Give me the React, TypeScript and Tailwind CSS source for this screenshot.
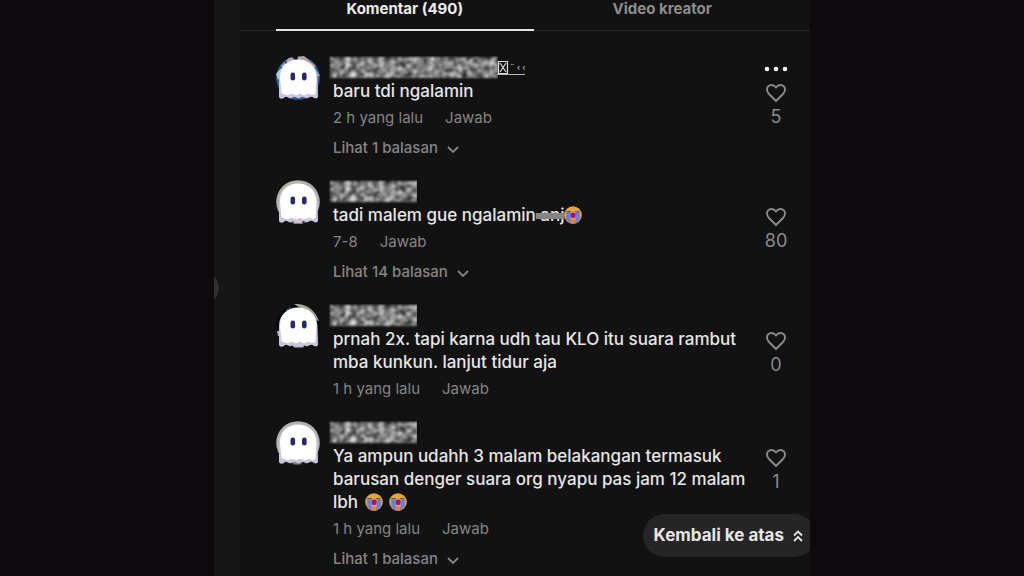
import { ReactNode } from 'react';

interface Comment {
  id: number;
  avatar: 'blue' | 'tan' | 'dark' | 'grey';
  nameWidth: string;
  extra?: boolean;
  body: ReactNode;
  time: string;
  likes: number;
  replies: number;
}

function CryingEmoji() {
  return (
    <svg viewBox="0 0 18 18" className="inline-block h-[18px] w-[18px] align-[-3px]" role="img" aria-label="menangis">
      <circle cx="9" cy="9" r="8.8" fill="#e3a63a" />
      <path d="M3 13.500h12Q13 17.800 9 17.800T3 13.500Z" fill="#e2803f" />
      <path d="M2.500 5.500h4.500M11 5.500h4.500" stroke="#7b5a3c" strokeWidth="1.200" />
      <path d="M2.200 6h4.400v11.200Q3.500 16 2.200 13Z" fill="#6580dc" />
      <path d="M11.600 6H15.800v7q-1.200 3-4.200 4.200Z" fill="#6580dc" />
      <path d="M2 12.500 4 14v2.500Q2.500 15 2 12.500Z" fill="#e06a52" />
      <rect x="6.700" y="6.600" width="4.800" height="5.400" rx="2" fill="#a9078c" />
    </svg>
  );
}

function Ghost({ tone }: { tone: Comment['avatar'] }) {
  return (
    <svg viewBox="0 0 44 44" className="mt-px h-11 w-11 shrink-0" aria-hidden="true">
      {tone === 'blue' && (
        <>
          <circle cx="22" cy="22" r="21.800" fill="#2a6398" />
          <path d="M5 10 13 2 28 0 40 10 34 14 22 5 8 15Z" fill="#b5a3a6" />
          <path d="M15 0 21 6 22 0Z" fill="#14151d" />
          <path d="M9 5l5 3-4 4Z" fill="#2b2f45" />
          <path d="M0 18 5 12 6 17 2 24Z" fill="#a5cbe0" />
          <path d="M37 9 44 20 40 21Z" fill="#88a9c7" />
        </>
      )}
      {tone === 'tan' && (
        <>
          <circle cx="22" cy="22" r="21.800" fill="#b4b1aa" />
          <path d="M4 34Q22 54 40 34Z" fill="#36312e" />
          <path d="M15 36h13l-2 7.500h-8Z" fill="#dfbda3" />
        </>
      )}
      {tone === 'dark' && (
        <>
          <circle cx="22" cy="22" r="21.800" fill="#07080b" />
          <path d="M18 0Q36-1 43 17L39 16 28 6Z" fill="#a7a49d" />
          <path d="M9 6 15 2 14 8Z" fill="#23415e" />
          <path d="M1 27h3v5H2Z" fill="#b9b7bb" />
          <path d="M15 39h15l-3 4.500h-9Z" fill="#c3bec9" />
        </>
      )}
      {tone === 'grey' && (
        <>
          <circle cx="22" cy="22" r="21.800" fill="#b5b3b0" />
          <path d="M3 35Q22 55 41 35Z" fill="#1c1b1b" />
          <path d="M13 39h16l-5 4.500h-6Z" fill="#858281" />
        </>
      )}
      <path
        d="M3 41V22C3 11 11 4 22 4s19 7 19.500 18l.5 19q-1.500 2.500-4.500.5-2.500-1.500-4.500 0t-4.500 0q-2-1.500-4 0t-4 0q-2-1.500-4 0t-4.500 0-4 .5Q4 44 3 41Z"
        fill="#cbc5e0"
      />
      <path
        d="M5.500 37 4 22C4 10 12 3.500 22 3.500S40.500 10 40.500 22L39.500 37q-1.500 3-4.500 1.500t-4.300 0-4.400 0-4.300 0-4.400 0-4.300 0-4.300 0T5.500 37Z"
        fill="#fff"
      />
      <rect x="14.500" y="16.500" width="4.600" height="8" rx="2.300" fill="#29296b" />
      <rect x="26" y="16.500" width="4.600" height="8" rx="2.300" fill="#29296b" />
    </svg>
  );
}

function HiddenName({ width }: { width: string }) {
  return (
    <svg className={`-ml-1 h-6 ${width}`} aria-hidden="true">
      <filter id="grain" x="0" y="0" width="100%" height="100%" filterUnits="userSpaceOnUse" colorInterpolationFilters="sRGB">
        <feTurbulence type="fractalNoise" baseFrequency="0.18" numOctaves="2" seed="4" />
        <feColorMatrix values="1.200 0 0 0 -0.090  1.200 0 0 0 -0.090  1.200 0 0 0 -0.090  0 0 0 0 1" />
        <feComposite in2="SourceGraphic" operator="in" />
        <feGaussianBlur stdDeviation="0.800" />
      </filter>
      <g filter="url(#grain)">
        <svg x="1" y="1" width="100%" height="100%">
          <rect width="100%" height="21" />
        </svg>
      </g>
    </svg>
  );
}

function Heart() {
  return (
    <svg viewBox="0 0 22 20" className="h-5 w-[22px]" fill="none" stroke="currentColor" strokeWidth="1.900" strokeLinejoin="round">
      <path d="M11 4.500C9.700 2.600 8.200 2 6.500 2 3.900 2 2 3.900 2 6.500c0 1.800.8 3.200 2 4.500L11 18l7-7c1.200-1.300 2-2.700 2-4.500C20 3.900 18.100 2 15.500 2c-1.700 0-3.200.6-4.500 2.500Z" />
    </svg>
  );
}

const comments: Comment[] = [
  { id: 1, avatar: 'blue', nameWidth: 'w-[169px]', extra: true, body: 'baru tdi ngalamin', time: '2 h yang lalu', likes: 5, replies: 1 },
  {
    id: 2,
    avatar: 'tan',
    nameWidth: 'w-[88px]',
    body: (
      <>
        tadi malem gue ngalamin<s className="decoration-[#858585] decoration-[6px]"> anj</s>
        <CryingEmoji />
      </>
    ),
    time: '7-8',
    likes: 80,
    replies: 14,
  },
  {
    id: 3,
    avatar: 'dark',
    nameWidth: 'w-[88px]',
    body: 'prnah 2x. tapi karna udh tau KLO itu suara rambut mba kunkun. lanjut tidur aja',
    time: '1 h yang lalu',
    likes: 0,
    replies: 0,
  },
  {
    id: 4,
    avatar: 'grey',
    nameWidth: 'w-[88px]',
    body: (
      <>
        Ya ampun udahh 3 malam belakangan termasuk barusan denger suara org nyapu pas jam 12 malam lbh{' '}
        <span className="ml-0.5 inline-flex gap-[6px] align-[-3px]">
          <CryingEmoji />
          <CryingEmoji />
        </span>
      </>
    ),
    time: '1 h yang lalu',
    likes: 1,
    replies: 1,
  },
];

function CommentItem({ comment }: { comment: Comment }) {
  return (
    <li className="flex items-start gap-[13px]">
      <Ghost tone={comment.avatar} />
      <div className="min-w-0 flex-1">
        <div className="flex h-[25px] items-center">
          <HiddenName width={comment.nameWidth} />
          {comment.extra && (
            <span className="-ml-px flex h-[14px] items-center border-b border-[#bbb] text-[#ddd]">
              <svg viewBox="0 0 12 13" className="h-[13px] w-3" fill="none" stroke="currentColor" strokeWidth="1.200">
                <path d="M1.500.5h9v12h-9ZM3 2l6 9M9 2l-6 9" />
              </svg>
              <span className="pl-px text-[8px]">¨ ‹ ‹</span>
            </span>
          )}
        </div>
        <p className="text-[17px] leading-[23px] font-medium text-[#e6e6e6]">{comment.body}</p>
        <div className="mt-[3px] flex h-6 items-center gap-[22px] text-[15px] text-[#858585]">
          <span>{comment.time}</span>
          <button>Jawab</button>
        </div>
        {comment.replies > 0 && (
          <button className="mt-[6px] flex h-6 items-center gap-[9px] text-[15px] font-medium text-[#858585]">
            Lihat {comment.replies} balasan
            <svg viewBox="0 0 12 8" className="mt-1 h-2 w-3" fill="none" stroke="currentColor" strokeWidth="1.800">
              <path d="m1 1 5 5 5-5" />
            </svg>
          </button>
        )}
      </div>
      <div className="flex w-[30px] shrink-0 flex-col items-center text-[#8a8a8a]">
        <div className="flex h-7 items-center">
          {comment.id === 1 && (
            <button aria-label="Lainnya" className="text-[#f0f0f0]">
              <svg viewBox="0 0 24 6" className="h-[6px] w-6" fill="currentColor">
                <circle cx="3" cy="3" r="2.300" />
                <circle cx="12" cy="3" r="2.300" />
                <circle cx="21" cy="3" r="2.300" />
              </svg>
            </button>
          )}
        </div>
        <button className="flex flex-col items-center gap-1" aria-label={`Suka ${comment.likes}`}>
          <Heart />
          <span className="text-[18px] leading-5">{comment.likes}</span>
        </button>
      </div>
    </li>
  );
}

export default function App() {
  return (
    <div className="h-screen overflow-hidden bg-[#0e090d] font-['Inter',sans-serif]">
      <div className="relative mx-auto flex h-full max-w-[596px] overflow-hidden bg-[#121212]">
        <aside className="flex w-[26px] shrink-0 items-center overflow-hidden bg-[#151515]">
          <button aria-label="Sebelumnya" className="-ml-[27px] h-8 w-8 shrink-0 rounded-full bg-[#303030]" />
        </aside>
        <main className="min-w-0 flex-1">
          <nav className="flex h-[31px] border-b border-[#252525] pr-[19px] pl-9 text-[15px] leading-[18px] font-bold">
            <button className="-mb-px flex-1 border-b-2 border-[#e4e4e4] pb-[11px] text-[#ececec]">Komentar (490)</button>
            <button className="flex-1 pb-3 text-[#8c8c8c]">Video kreator</button>
          </nav>
          <ul className="flex flex-col gap-[19px] pt-6 pr-[19px] pl-9">
            {comments.map((comment) => (
              <CommentItem key={comment.id} comment={comment} />
            ))}
          </ul>
        </main>
        <button className="absolute right-[-6px] bottom-[19px] flex h-[43px] items-center gap-[9px] rounded-full bg-[#252525] pr-[13px] pl-[11px] text-[17px] font-bold text-[#e6e6e6]">
          Kembali ke atas
          <svg viewBox="0 0 10 12" className="h-3 w-[10px]" fill="none" stroke="currentColor" strokeWidth="1.800">
            <path d="m1 5.500 4-4 4 4M1 11l4-4 4 4" />
          </svg>
        </button>
      </div>
    </div>
  );
}
